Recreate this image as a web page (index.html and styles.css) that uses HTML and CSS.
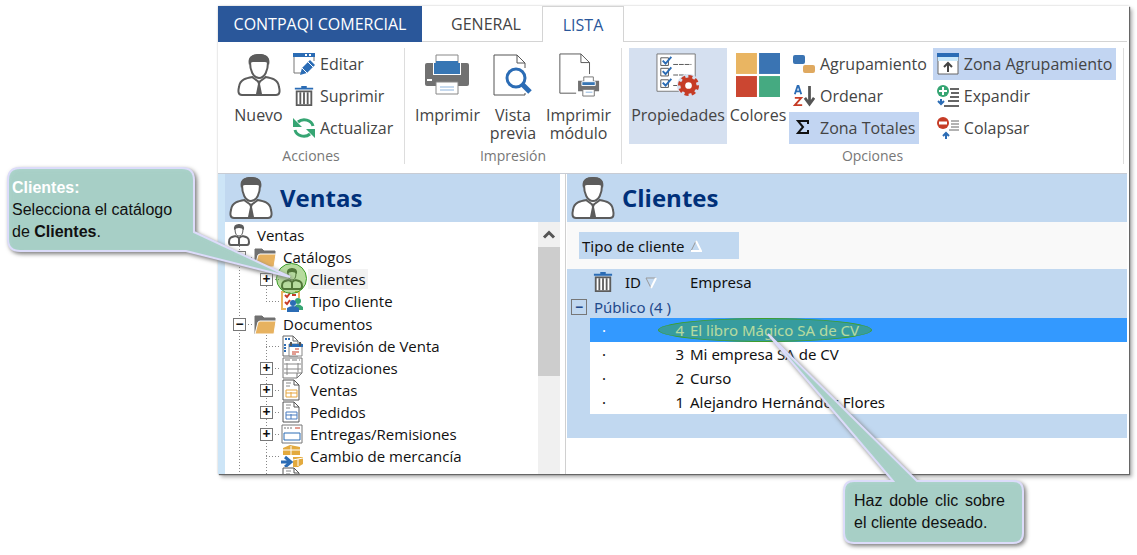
FILE: index.html
```html
<!DOCTYPE html>
<html lang="es">
  <head>
    <meta charset="UTF-8" />
    <meta name="viewport" content="width=device-width, initial-scale=1.0" />
    <title>Catálogo de clientes</title>
    <link rel="stylesheet" href="styles.css">
  </head>
  <body>
    <svg class="symbols" aria-hidden="true">
      <symbol id="person" viewBox="0 0 44 44">
        <path d="M16 24 C10 25 3 26 2 34 C1 38 1 42 5 42 H39 C43 42 43 38 42 34 C41 26 34 25 28 24" fill="#fff" stroke="#5c5c5c" stroke-width="2" />
        <path d="M13 9 C13 3 17 2 22 2 S31 3 31 9 C31 17 28 25 22 25 S13 17 13 9Z" fill="#fff" stroke="#5c5c5c" stroke-width="2" />
        <path d="M12 12 C10 4 15 1 22 1 S34 4 32 12 C30 8 27 9 22 9 S14 8 12 12Z" fill="#5c5c5c" />
        <path d="M15 24 L22 29 L29 24" fill="none" stroke="#5c5c5c" stroke-width="2" />
        <path d="M20 28 H24 L23 31 L25 41 H19 L21 31Z" fill="#5c5c5c" />
      </symbol>
      <symbol id="person-small" viewBox="0 0 22 22">
        <path d="M8 12 C4 13 1 13 1 18 Q1 21 3 21 H19 Q21 21 21 18 C21 13 18 13 14 12" fill="#fff" stroke="#5c5c5c" stroke-width="2" />
        <path d="M7 5 Q7 1 11 1 T15 5 Q15 12 11 12 T7 5Z" fill="#fff" stroke="#5c5c5c" stroke-width="1" />
        <path d="M6 6 Q5 0 11 0 T16 6 Q14 4 11 4 T6 6Z" fill="#5c5c5c" />
        <path d="M8 12 L11 14 L14 12 M11 14 V20" fill="none" stroke="#5c5c5c" stroke-width="2" />
      </symbol>
      <symbol id="edit" viewBox="0 0 22 22">
        <path d="M1 4 V20 H8 M21 4 V8" fill="none" stroke="#777" />
        <path d="M0 0 H22 V4 H0Z" fill="#2b6cb5" />
        <path d="M12 2 H14 M16 2 H18" stroke="#fff" stroke-width="2" />
        <path d="M7 22 L9 15 L17 7 L22 12 L14 20Z" fill="#2b6cb5" />
        <path d="M9 15 L14 20 M15 9 L20 14" stroke="#fff" />
      </symbol>
      <symbol id="trash" viewBox="0 0 22 24">
        <path d="M1 4 H21 M8 2 H14" fill="none" stroke="#2b6cb5" stroke-width="2" />
        <path d="M3 7 H19 V22 H3Z" fill="#fff" stroke="#5c5c5c" stroke-width="2" />
        <path d="M7 8 V21 M11 8 V21 M15 8 V21" stroke="#5c5c5c" stroke-width="2" />
      </symbol>
      <symbol id="refresh" viewBox="0 0 22 22">
        <path d="M20 9 A9 8 0 0 0 5 5 M2 13 A9 8 0 0 0 17 17" fill="none" stroke="#36a573" stroke-width="3" />
        <path d="M0 1 V10 H9Z M22 21 V12 H13Z" fill="#36a573" />
      </symbol>
      <symbol id="printer" viewBox="0 0 44 42">
        <path d="M0 11 Q0 9 2 9 H42 Q44 9 44 11 V30 Q44 32 42 32 H2 Q0 32 0 30Z" fill="#717171" />
        <path d="M8 9 H36 V21 H8Z" fill="#fff" />
        <path d="M11 15 V1 H33 V15" fill="#fff" stroke="#888" />
        <path d="M9 9 H11 V7 H33 V9 H35 V20 H9Z" fill="#3776b4" />
        <path d="M2 26 H7" stroke="#fff" stroke-width="2" />
        <path d="M11 28 H33 V40 H11Z" fill="#fff" stroke="#888" stroke-width="1" />
        <path d="M15 33 H29 M15 36 H29" stroke="#8db4dd" />
      </symbol>
      <symbol id="preview" viewBox="0 0 40 44">
        <path d="M32 15 V10 L24 2 H1 V42 H32 V40 M24 2 V10 H32" fill="#fff" stroke="#555" />
        <circle cx="23" cy="25" r="9" fill="#fff" stroke="#2b6cb5" stroke-width="3" />
        <path d="M29 31 L37 39" stroke="#2b6cb5" stroke-width="5" />
      </symbol>
      <symbol id="module" viewBox="0 0 42 46">
        <path d="M32 22 V10 L23 1 H1 V42 H18 M23 1 V10 H32" fill="#fff" stroke="#555" />
        <path d="M20 29 H42 V40 H20Z" fill="#717171" />
        <path d="M26 32 V25 H36 V32" fill="#fff" stroke="#777" />
        <path d="M24 30 H38 V34 H24Z" fill="#3776b4" stroke="#fff" stroke-width="1" />
        <path d="M25 38 H37 V45 H25Z" fill="#fff" stroke="#777" />
        <path d="M28 41 H35" stroke="#8db4dd" />
      </symbol>
      <symbol id="properties" viewBox="0 0 46 46">
        <path d="M1 1 H41 V40 H1Z" fill="#fff" stroke="#777" />
        <path d="M5 5 H13 V13 H5Z M5 16 H13 V24 H5Z M5 28 H13 V36 H5Z" fill="none" stroke="#555" />
        <path d="M7 8 L10 11 L16 4 M7 19 L10 22 L16 15 M7 31 L10 34 L16 27" fill="none" stroke="#2b6cb5" stroke-width="2" />
        <path d="M18 12 H37 M18 23 H31 M18 34 H23" stroke="#555" stroke-width="1" stroke-dasharray="5 1" />
        <circle cx="34" cy="34" r="12" fill="#d5e0f0" />
        <circle cx="34" cy="34" r="6" fill="#fff" stroke="#c63c26" stroke-width="5" />
        <circle cx="34" cy="34" r="9" fill="none" stroke="#c63c26" stroke-width="4" stroke-dasharray="4 3" />
      </symbol>
      <symbol id="colors" viewBox="0 0 42 42">
        <path d="M0 0 H20 V20 H0Z" fill="#e9b562" />
        <path d="M22 0 H42 V20 H22Z" fill="#3a74b3" />
        <path d="M0 22 H20 V42 H0Z" fill="#cb4631" />
        <path d="M22 22 H42 V42 H22Z" fill="#45aa81" />
      </symbol>
      <symbol id="grouping" viewBox="0 0 22 22">
        <rect x="0" y="2" width="12" height="9" rx="2" fill="#3a74b3" />
        <rect x="10" y="12" width="12" height="8" rx="2" fill="#dfa960" />
      </symbol>
      <symbol id="sort" viewBox="0 0 22 24">
        <path d="M1 10 L4 1 H5 L8 10 M2 7 H7" fill="none" stroke="#2b6cb5" stroke-width="2" />
        <path d="M1 14 H8 L1 22 H9" fill="none" stroke="#c63c26" stroke-width="2" />
        <path d="M17 1 V20 M12 14 L17 21 L22 14" fill="none" stroke="#555" stroke-width="3" />
      </symbol>
      <symbol id="sum" viewBox="0 0 22 22">
        <path d="M15 7 V4 H5 L10 10 L5 16 H15 V13" fill="none" stroke="#111" stroke-width="2" />
      </symbol>
      <symbol id="zone" viewBox="0 0 22 22">
        <path d="M1 1 H21 V21 H1Z" fill="#fff" stroke="#666" />
        <path d="M0 0 H22 V4 H0Z" fill="#2b6cb5" />
        <path d="M1 4 H21 V8 H1Z" fill="#c9e8fa" />
        <path d="M11 19 V11 M7 14 L11 10 L15 14" fill="none" stroke="#444" stroke-width="2" />
      </symbol>
      <symbol id="expand" viewBox="0 0 22 22">
        <path d="M13 4 H22 M14 8 H22 M13 12 H22 M11 16 H22 M7 21 H22" stroke="#666" stroke-width="2" />
        <circle cx="6" cy="6" r="6" fill="#36a573" />
        <path d="M6 2 V10 M2 6 H10" stroke="#fff" stroke-width="2" />
        <path d="M4 14 V19 M1 16 L4 19 L7 16" fill="none" stroke="#2b6cb5" stroke-width="2" />
      </symbol>
      <symbol id="collapse" viewBox="0 0 22 22">
        <path d="M14 4 H22 M14 7 H22 M14 10 H22 M12 13 H22" stroke="#666" stroke-width="1" />
        <circle cx="6" cy="6" r="6" fill="#c63c26" />
        <path d="M2 6 H10" stroke="#fff" stroke-width="3" />
        <path d="M9 22 V17 M6 19 L9 16 L12 19" fill="none" stroke="#2b6cb5" stroke-width="2" />
      </symbol>
      <symbol id="folder" viewBox="0 0 22 22">
        <path d="M1 21 V3 H8 L10 5 H21 V9" fill="#717171" stroke="#717171" />
        <path d="M6 8 H22 L20 21 H1 L4 9Z" fill="#e7b260" stroke="#fff" stroke-width="1" />
      </symbol>
      <symbol id="types" viewBox="0 0 22 22">
        <path d="M4 2 H1 V19 H5 M18 8 V2 H14" fill="none" stroke="#e9b562" stroke-width="2" />
        <path d="M4 5 L6 7 L9 3 M11 5 H15 M4 12 L6 14 L9 10" fill="none" stroke="#c63c26" stroke-width="2" />
        <circle cx="17" cy="11" r="3" fill="#36a573" />
        <path d="M14 20 V16 Q17 12 22 17 V20Z" fill="#36a573" />
        <circle cx="12" cy="13" r="3" fill="#2b6cb5" />
        <path d="M6 22 V18 Q12 14 18 18 V22Z" fill="#2b6cb5" />
      </symbol>
      <symbol id="forecast" viewBox="0 0 22 22">
        <path d="M2 1 H12 L17 6 V21 H2Z M12 1 V6 H17" fill="#fff" stroke="#666" stroke-width="1" />
        <path d="M4 4 H9 M4 9 V18" stroke="#2b6cb5" stroke-width="2" stroke-dasharray="2 1" />
        <path d="M8 9 H21 V21 H8Z" fill="#fff" stroke="#888" />
        <path d="M8 9 H22 V12 H8Z" fill="#2b6cb5" />
        <path d="M10 7 V11 M19 7 V11" stroke="#555" stroke-width="2" />
        <path d="M11 17 H18 M14 14 H18 M11 19 H15" stroke="#c63c26" stroke-width="1" />
      </symbol>
      <symbol id="quote" viewBox="0 0 22 22">
        <path d="M2 1 H21 V16 L16 21 H2Z M21 16 H16 V21" fill="#fff" stroke="#777" />
        <path d="M4 3 H19" stroke="#777" stroke-width="1" stroke-dasharray="5 2" />
        <path d="M3 7 H20 M3 12 H20 M3 16 H16 M6 6 V18 M17 6 V15" stroke="#888" />
      </symbol>
      <symbol id="sale" viewBox="0 0 22 22">
        <path d="M2 1 H13 L18 6 V21 H2Z M13 1 V6 H18" fill="#fff" stroke="#555" />
        <path d="M5 4 H10 M5 7 H9" stroke="#888" />
        <path d="M5 11 H16 V18 H5Z M5 14 H16 M10 13 V18" fill="#fff" stroke="#e5a53f" />
      </symbol>
      <symbol id="order" viewBox="0 0 22 22">
        <path d="M2 1 H13 L18 6 V21 H2Z M13 1 V6 H18" fill="#fff" stroke="#555" />
        <path d="M5 4 H10 M5 7 H9" stroke="#888" />
        <path d="M5 11 H16 V18 H5Z M5 14 H16 M10 13 V18" fill="#fff" stroke="#4a7cc0" />
      </symbol>
      <symbol id="delivery" viewBox="0 0 22 22">
        <path d="M1 2 H21 V20 H1Z" fill="#fff" stroke="#777" />
        <path d="M3 5 H12" stroke="#777" stroke-dasharray="2 1" />
        <path d="M14 5 H19" stroke="#c63c26" stroke-width="1" />
        <path d="M3 10 H19 V17 H3Z" fill="#fff" stroke="#2b6cb5" stroke-width="1" />
      </symbol>
      <symbol id="goods" viewBox="0 0 22 22">
        <path d="M2 3 L9 0 L19 2 V10 H2Z M12 12 H22 V19 L17 22 H12Z" fill="#e3aa3e" />
        <path d="M2 5 H19 M10 1 V10 M12 15 L22 13 M17 14 V21" stroke="#fff" />
        <path d="M0 17 H8 M4 12 L10 17 L4 22" fill="none" stroke="#2b6cb5" stroke-width="3" />
      </symbol>
    </svg>

    <main class="window">
      <nav class="tabs">
        <button class="tab tab-app" type="button">CONTPAQI COMERCIAL</button>
        <button class="tab tab-general" type="button">GENERAL</button>
        <button class="tab tab-active" type="button">LISTA</button>
      </nav>

      <div class="ribbon">
        <section class="group">
          <div class="group-body">
            <button class="tool-large tool-new" type="button"><svg class="icon-large"><use href="#person" /></svg>Nuevo</button>
            <div class="tool-stack">
              <button class="tool" type="button"><svg><use href="#edit" /></svg>Editar</button>
              <button class="tool" type="button"><svg><use href="#trash" /></svg>Suprimir</button>
              <button class="tool" type="button"><svg><use href="#refresh" /></svg>Actualizar</button>
            </div>
          </div>
          <h2 class="group-title">Acciones</h2>
        </section>
        <section class="group group-print">
          <div class="group-body">
            <button class="tool-large" type="button"><svg class="icon-large"><use href="#printer" /></svg>Imprimir</button>
            <button class="tool-large" type="button"><svg class="icon-large"><use href="#preview" /></svg>Vista<br>previa</button>
            <button class="tool-large" type="button"><svg class="icon-large"><use href="#module" /></svg>Imprimir<br>módulo</button>
          </div>
          <h2 class="group-title">Impresión</h2>
        </section>
        <section class="group group-options">
          <div class="group-body">
            <button class="tool-large tool-props" type="button"><svg class="icon-large"><use href="#properties" /></svg>Propiedades</button>
            <button class="tool-large tool-colors" type="button"><svg class="icon-large"><use href="#colors" /></svg>Colores</button>
            <div class="tool-stack">
              <button class="tool" type="button"><svg><use href="#grouping" /></svg>Agrupamiento</button>
              <button class="tool" type="button"><svg><use href="#sort" /></svg>Ordenar</button>
              <button class="tool tool-on" type="button"><svg><use href="#sum" /></svg>Zona Totales</button>
            </div>
            <div class="tool-stack">
              <button class="tool tool-on" type="button"><svg><use href="#zone" /></svg>Zona Agrupamiento</button>
              <button class="tool" type="button"><svg><use href="#expand" /></svg>Expandir</button>
              <button class="tool" type="button"><svg><use href="#collapse" /></svg>Colapsar</button>
            </div>
          </div>
          <h2 class="group-title">Opciones</h2>
        </section>
      </div>

      <div class="workspace">
        <aside class="sidebar">
          <header class="panel-header"><svg class="icon-large"><use href="#person" /></svg><h1>Ventas</h1></header>
          <div class="tree-area">
            <div class="tree">
              <div class="node"><svg><use href="#person-small" /></svg><span>Ventas</span></div>
              <ul class="branch">
                <li>
                  <div class="node"><span class="joint"><button class="toggle" type="button" aria-label="Contraer">−</button></span><svg><use href="#folder" /></svg><span>Catálogos</span></div>
                  <ul class="leaves leaves-closed">
                    <li class="node"><span class="joint"><button class="toggle" type="button" aria-label="Expandir">+</button></span><svg><use href="#person-small" /></svg><span class="node-current">Clientes</span></li>
                    <li class="node"><span class="joint"></span><svg><use href="#types" /></svg><span>Tipo Cliente</span></li>
                  </ul>
                </li>
                <li>
                  <div class="node"><span class="joint"><button class="toggle" type="button" aria-label="Contraer">−</button></span><svg><use href="#folder" /></svg><span>Documentos</span></div>
                  <ul class="leaves">
                    <li class="node"><span class="joint"></span><svg><use href="#forecast" /></svg><span>Previsión de Venta</span></li>
                    <li class="node"><span class="joint"><button class="toggle" type="button" aria-label="Expandir">+</button></span><svg><use href="#quote" /></svg><span>Cotizaciones</span></li>
                    <li class="node"><span class="joint"><button class="toggle" type="button" aria-label="Expandir">+</button></span><svg><use href="#sale" /></svg><span>Ventas</span></li>
                    <li class="node"><span class="joint"><button class="toggle" type="button" aria-label="Expandir">+</button></span><svg><use href="#order" /></svg><span>Pedidos</span></li>
                    <li class="node"><span class="joint"><button class="toggle" type="button" aria-label="Expandir">+</button></span><svg><use href="#delivery" /></svg><span>Entregas/Remisiones</span></li>
                    <li class="node"><span class="joint"></span><svg><use href="#goods" /></svg><span>Cambio de mercancía</span></li>
                    <li class="node"><span class="joint"></span><svg><use href="#order" /></svg></li>
                  </ul>
                </li>
              </ul>
            </div>
            <div class="scrollbar">
              <svg class="scroll-up" viewBox="0 0 22 24"><path d="M6 15 L11 10 L16 15" fill="none" stroke="#555" stroke-width="3" /></svg>
              <div class="scroll-thumb"></div>
            </div>
          </div>
        </aside>

        <section class="content">
          <header class="panel-header"><svg class="icon-large"><use href="#person" /></svg><h1>Clientes</h1></header>
          <div class="group-zone">
            <button class="group-chip" type="button">Tipo de cliente <svg class="arrow" viewBox="0 0 12 12"><path d="M1 11 L6 1" stroke="#999" /><path d="M6 1 L11 11 H1" fill="none" stroke="#fff" stroke-width="2" /></svg></button>
          </div>
          <table class="grid">
            <colgroup>
              <col class="col-gutter">
              <col class="col-mark">
              <col class="col-id">
              <col>
            </colgroup>
            <thead>
              <tr>
                <th></th>
                <th><svg class="grid-trash"><use href="#trash" /></svg></th>
                <th>ID <svg class="arrow" viewBox="0 0 12 12"><path d="M6 11 L1 1 H11" fill="none" stroke="#999" /><path d="M11 1 L6 11" stroke="#fff" stroke-width="2" /></svg></th>
                <th>Empresa</th>
              </tr>
            </thead>
            <tbody>
              <tr class="grid-group">
                <td><button class="toggle toggle-grid" type="button" aria-label="Contraer">−</button></td>
                <td colspan="3">Público (4 )</td>
              </tr>
              <tr class="grid-selected"><td></td><td>·</td><td>4</td><td>El libro Mágico SA de CV</td></tr>
              <tr><td></td><td>·</td><td>3</td><td>Mi empresa SA de CV</td></tr>
              <tr><td></td><td>·</td><td>2</td><td>Curso</td></tr>
              <tr><td></td><td>·</td><td>1</td><td>Alejandro Hernández Flores</td></tr>
            </tbody>
            <tfoot>
              <tr><td colspan="4"></td></tr>
            </tfoot>
          </table>
        </section>
      </div>
    </main>

    <div class="mark mark-tree"></div>
    <div class="mark mark-row"></div>

    <div class="callout callout-tree">
      <svg viewBox="0 0 300 130">
        <path d="M20 8 H182 Q194 8 194 20 V72 L290 117 L186 91 H20 Q8 91 8 79 V20 Q8 8 20 8Z" />
      </svg>
      <p><strong class="callout-title">Clientes:</strong><br>Selecciona el catálogo<br>de <strong>Clientes</strong>.</p>
    </div>
    <div class="callout callout-row">
      <svg viewBox="0 0 270 220">
        <path d="M94 151 H133 L8 4 L157 151 H253 Q263 151 263 161 V203 Q263 213 253 213 H94 Q84 213 84 203 V161 Q84 151 94 151Z" />
      </svg>
      <p>Haz doble clic sobre el cliente deseado.</p>
    </div>
  </body>
</html>
```

FILE: styles.css
```css
* {
  box-sizing: border-box;
}
body {
  margin: 0;
  padding: 6px 8px 0 218px;
  height: 100vh;
  overflow: hidden;
  position: relative;
  font-family: "Open Sans", "Noto Sans", sans-serif;
  font-size: 15px;
  color: #111;
  background-color: #fff;
}
button {
  margin: 0;
  padding: 0;
  border: 0;
  background: none;
  font: inherit;
  color: inherit;
}
h1,
h2,
p,
ul {
  margin: 0;
  padding: 0;
}
ul {
  list-style: none;
}
svg {
  display: block;
  flex: none;
}
.symbols {
  display: none;
}
.window {
  display: flex;
  flex-direction: column;
  height: calc(100vh - 87px);
  background-color: #fff;
  border-right: 2px solid #fff;
  box-shadow: 1px 1px 1px #666, 3px 3px 4px #aaa, 0 0 2px #ccc;
}

/* tabs */
.tabs {
  display: flex;
  flex: none;
  height: 36px;
  font-size: 16px;
  color: #444;
  border-bottom: 1px solid #d4d4d4;
}
.tab {
  height: 36px;
}
.tab-app {
  width: 204px;
  color: #fff;
  background-color: #2a579a;
}
.tab-general {
  width: 120px;
  padding-left: 8px;
}
.tab-active {
  width: 82px;
  color: #2a579a;
  background-color: #fff;
  border: 1px solid #d4d4d4;
  border-bottom: 0;
}

/* ribbon */
.ribbon {
  display: flex;
  flex: none;
  height: 132px;
  padding-top: 6px;
  font-size: 16px;
  line-height: 18px;
  color: #444;
  border-bottom: 1px solid #c8ccd4;
}
.group {
  width: 187px;
  height: 116px;
  border-right: 1px solid #ddd;
}
.group-print {
  width: 217px;
}
.group-options {
  width: 502px;
}
.group-body {
  display: flex;
  height: 96px;
}
.group-print .group-body {
  justify-content: space-evenly;
}
.group-options .group-body {
  padding-left: 7px;
}
.group-title {
  font-size: 14px;
  font-weight: normal;
  line-height: 24px;
  text-align: center;
  color: #777;
}
.tool-large {
  display: flex;
  flex-direction: column;
  align-items: center;
  padding-top: 5px;
}
.icon-large {
  width: 44px;
  height: 44px;
}
.tool-large .icon-large {
  margin-bottom: 9px;
}
.tool-new {
  width: 71px;
  padding-left: 10px;
}
.tool-props {
  width: 98px;
  background-color: #d5e0f0;
}
.tool-colors {
  width: 62px;
}
.tool-stack {
  display: flex;
  flex-direction: column;
  align-items: flex-start;
}
.tool-stack + .tool-stack {
  margin-left: 2px;
}
.tool {
  display: flex;
  align-items: center;
  gap: 5px;
  height: 32px;
  padding: 0 4px;
  white-space: nowrap;
}
.tool svg {
  width: 22px;
  height: 22px;
}
.tool-on {
  background-color: #c2d5f2;
}

/* panels */
.workspace {
  display: flex;
  flex: 1;
  min-height: 0;
}
.sidebar {
  display: flex;
  flex-direction: column;
  flex: none;
  width: 342px;
  border-left: 7px solid #cde5f7;
}
.panel-header {
  display: flex;
  flex: none;
  align-items: center;
  gap: 7px;
  height: 48px;
  padding-left: 4px;
  background-color: #c1d8f0;
}
.panel-header h1 {
  font-size: 24px;
  line-height: 32px;
  color: #00307a;
}
.tree-area {
  display: flex;
  flex: 1;
  min-height: 0;
}
.tree {
  flex: 1;
  padding: 2px 0 0 3px;
  overflow: hidden;
}
.node {
  display: flex;
  align-items: center;
  height: 22px;
  line-height: 20px;
  white-space: nowrap;
}
.node svg {
  width: 22px;
  height: 22px;
  margin-right: 5px;
}
.node > span:last-child {
  padding: 0 2px;
}
.node > .node-current {
  background-color: #f2f2f2;
}
.branch {
  padding-left: 5px;
  background: repeating-linear-gradient(#888 0 1px, transparent 1px 3px) 11px 0 / 1px 100% no-repeat;
}
.branch > li + li {
  margin-top: 1px;
}
.leaves {
  padding-left: 27px;
  background: repeating-linear-gradient(#888 0 1px, transparent 1px 3px) 33px 0 / 1px 100% no-repeat;
}
.leaves-closed {
  background-size: 1px calc(100% - 11px);
}
.joint {
  display: flex;
  flex: none;
  width: 21px;
  background: repeating-linear-gradient(to right, #888 0 1px, transparent 1px 3px) 6px 50% / 15px 1px no-repeat;
}
.joint:empty {
  height: 13px;
}
.toggle {
  width: 13px;
  height: 13px;
  border: 1px solid #777;
  background-color: #fff;
  font-size: 14px;
  font-weight: bold;
  line-height: 10px;
}
.scrollbar {
  width: 22px;
  background-color: #f0f0f0;
}
.scroll-up {
  width: 22px;
  height: 25px;
}
.scroll-thumb {
  height: 129px;
  background-color: #cdcdcd;
}
.content {
  flex: 1;
  margin-left: 5px;
  border-left: 1px solid #d0d0d0;
  padding-left: 1px;
  font-family: "Noto Sans", "Open Sans", sans-serif;
}
.content .panel-header {
  font-family: "Open Sans", "Noto Sans", sans-serif;
}
.group-zone {
  padding: 10px 12px;
  background-color: #f9f9f9;
}
.group-chip {
  display: flex;
  align-items: center;
  gap: 5px;
  width: 160px;
  height: 27px;
  padding-left: 3px;
  background-color: #c1d8f0;
}
.arrow {
  display: inline-block;
  width: 12px;
  height: 12px;
  vertical-align: -1px;
}

/* customers */
.grid {
  width: 100%;
  table-layout: fixed;
  border-collapse: collapse;
}
.col-gutter {
  width: 23px;
}
.col-mark {
  width: 30px;
}
.col-id {
  width: 67px;
}
.grid th,
.grid td {
  height: 24px;
  padding: 0 3px;
  line-height: 20px;
}
.grid th {
  height: 26px;
  font-weight: normal;
  text-align: left;
}
.grid thead,
.grid tfoot,
.grid-group,
.grid td:first-child {
  background-color: #c1d8f0;
}
.grid th:nth-child(3) {
  padding-left: 5px;
}
.grid td:nth-child(2) {
  padding-left: 12px;
}
.grid td:nth-child(3) {
  text-align: right;
}
.grid .grid-group td {
  height: 23px;
  padding-left: 4px;
  color: #1f4a8c;
}
.grid-trash {
  width: 20px;
  height: 22px;
}
.toggle-grid {
  display: block;
  width: 16px;
  height: 16px;
  background-color: transparent;
}
.grid-selected {
  color: #fff;
  background-color: #39f;
}

/* highlights and notes */
.mark {
  position: absolute;
  border: 1px solid #3f9e2c;
  border-radius: 50%;
  background-color: rgba(64, 160, 0, 0.38);
}
.mark-tree {
  left: 276px;
  top: 263px;
  width: 31px;
  height: 31px;
}
.mark-row {
  left: 658px;
  top: 318px;
  width: 214px;
  height: 24px;
}
.callout {
  position: absolute;
  font-family: "Liberation Sans", Arial, sans-serif;
  font-size: 16px;
  line-height: 22px;
}
.callout svg {
  width: 100%;
  height: 100%;
  fill: rgba(170, 212, 203, 0.94);
  stroke: #dcdcfa;
  stroke-width: 2px;
  filter: drop-shadow(2px 2px 2px #777);
}
.callout p {
  position: absolute;
}
.callout-tree {
  left: 0;
  top: 160px;
  width: 300px;
  height: 130px;
}
.callout-tree p {
  left: 12px;
  top: 17px;
}
.callout-title {
  color: #fff;
}
.callout-row {
  left: 760px;
  top: 330px;
  width: 270px;
  height: 220px;
}
.callout-row p {
  left: 94px;
  top: 160px;
  width: 151px;
  text-align: justify;
}
```
